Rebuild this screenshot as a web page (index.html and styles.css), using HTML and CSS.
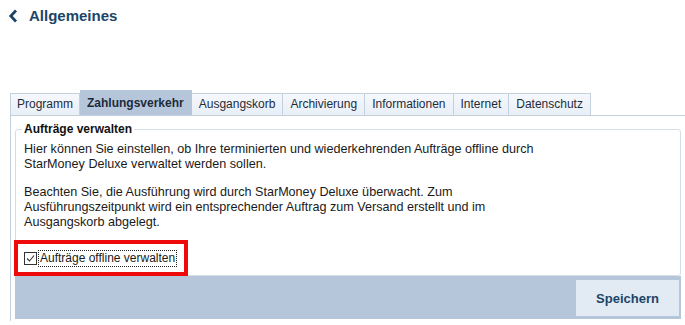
FILE: index.html
```html
<!DOCTYPE html>
<html lang="de">
<head>
  <meta charset="utf-8" />
  <title>Allgemeines</title>
  <link rel="stylesheet" href="styles.css">
</head>
<body>
  <div class="header">
    <svg class="back" width="10" height="14" viewBox="0 0 10 14">
      <path d="M8 1.5 L2.8 7 L8 12.5" fill="none" stroke="#1b4568" stroke-width="2.8"/>
    </svg>
    <h1>Allgemeines</h1>
  </div>

  <div class="tabs">
    <div class="tab">Programm</div>
    <div class="tab active">Zahlungsverkehr</div>
    <div class="tab">Ausgangskorb</div>
    <div class="tab">Archivierung</div>
    <div class="tab">Informationen</div>
    <div class="tab">Internet</div>
    <div class="tab">Datenschutz</div>
  </div>

  <div class="panel">
    <fieldset class="group">
      <legend>Aufträge verwalten</legend>
      <p>Hier können Sie einstellen, ob Ihre terminierten und wiederkehrenden Aufträge offline durch<br>StarMoney Deluxe verwaltet werden sollen.</p>
      <p>Beachten Sie, die Ausführung wird durch StarMoney Deluxe überwacht. Zum<br>Ausführungszeitpunkt wird ein entsprechender Auftrag zum Versand erstellt und im<br>Ausgangskorb abgelegt.</p>
      <div class="check-row">
        <span class="mark"></span>
        <span class="box">
          <svg width="13" height="13" viewBox="0 0 13 13">
            <rect x="0.5" y="0.5" width="12" height="12" fill="#fff" stroke="#333"/>
            <path d="M3 6.5 L5.5 9 L10 3.5" fill="none" stroke="#333" stroke-width="1.1"/>
          </svg>
        </span>
        <label class="focus">Aufträge offline verwalten</label>
      </div>
    </fieldset>
    <div class="actions">
      <button class="save">Speichern</button>
    </div>
  </div>
</body>
</html>
```

FILE: styles.css
```css
body {
  margin: 0;
  font-family: "Liberation Sans", Arial, sans-serif;
  font-size: 12px;
  color: #1a1a1a;
  background: #fff;
}

.header {
  display: flex;
  align-items: center;
  gap: 11px;
  height: 31px;
  padding: 0 0 0 8px;
}
h1 {
  margin: 0;
  font-size: 15px;
  font-weight: bold;
  color: #1b4568;
}

.tabs {
  display: flex;
  align-items: flex-end;
  margin: 60px 0 0 10px;
  height: 24px;
}
.tab {
  height: 21px;
  line-height: 21px;
  padding: 0 7px;
  border: 1px solid #c3d0de;
  border-bottom: none;
  border-left: none;
  background: linear-gradient(#f5f8fc, #e9eff7);
  color: #1e2c3a;
  white-space: nowrap;
}
.tab:first-child {
  border-left: 1px solid #c3d0de;
  padding: 0 6px;
}
.tab.active {
  height: 24px;
  line-height: 25px;
  background: #b5c6da;
  border-color: #b5c6da;
  font-weight: bold;
  padding: 0 7px;
}

.panel {
  border-top: 1px solid #c3d0de;
  border-left: 1px solid #c3d0de;
  margin-left: 10px;
  padding: 6px 4px 2px 4px;
}

.group {
  margin: 0;
  border: 1px solid #d5dde7;
  border-radius: 3px;
  padding: 0 6px 7px 6px;
}
.group legend {
  padding: 0 2px;
  font-weight: bold;
  font-size: 12px;
  color: #111;
}
.group p {
  margin: 6px 0 13px 2px;
  font-size: 12.6px;
  line-height: 15px;
}
.group p + p {
  margin-top: 0;
}

.check-row {
  position: relative;
  display: flex;
  align-items: center;
  height: 20px;
  margin-top: 18px;
  padding-left: 2px;
}
.check-row .mark {
  position: absolute;
  left: -8px;
  top: -8px;
  width: 166px;
  height: 28px;
  border: 4px solid #ee0a0a;
}
.check-row .box {
  display: flex;
  width: 13px;
  height: 13px;
  margin-right: 2px;
}
.check-row .focus {
  outline: 1px dotted #222;
  outline-offset: 0;
  padding: 0 1px;
  line-height: 15px;
}

.actions {
  display: flex;
  justify-content: flex-end;
  background: #b6c6da;
  padding: 4px 2px 3px 0;
}
.save {
  width: 103px;
  height: 36px;
  border: none;
  background: #e2eaf4;
  color: #1b4568;
  font-family: "Liberation Sans", Arial, sans-serif;
  font-size: 13px;
  font-weight: bold;
}
```
